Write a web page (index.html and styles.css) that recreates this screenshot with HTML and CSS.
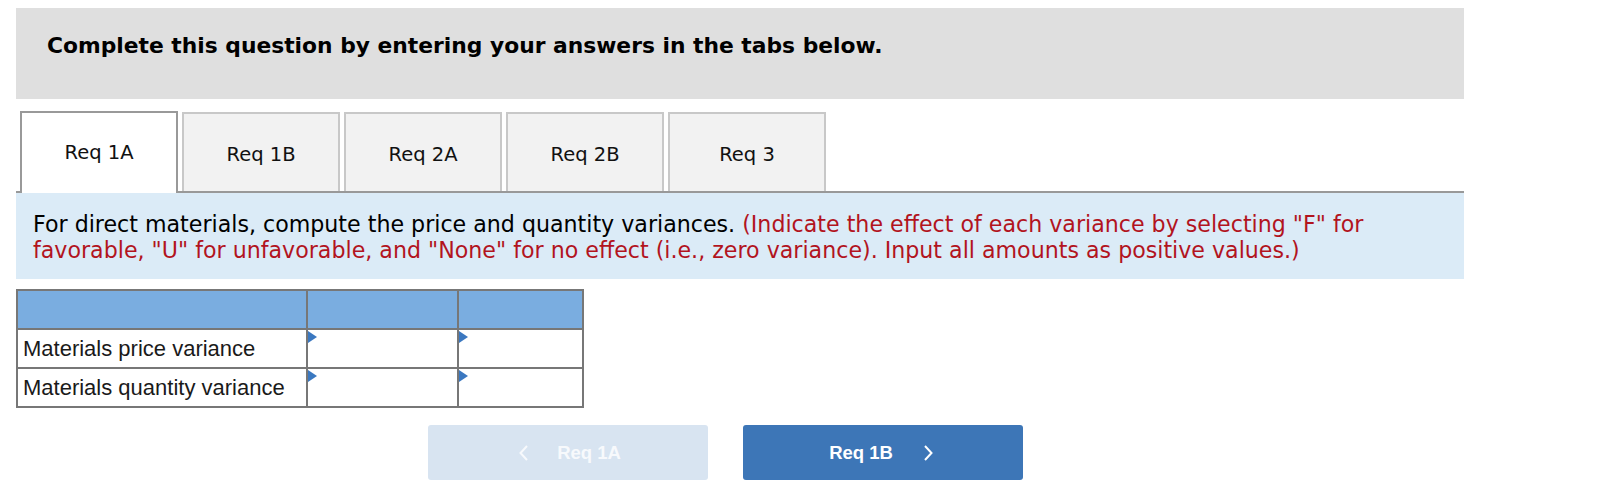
FILE: index.html
```html
<!DOCTYPE html>
<html lang="en">
<head>
<meta charset="utf-8">
<title>Req 1A</title>
<link rel="stylesheet" href="styles.css">
</head>
<body>
<div class="page">
  <div class="banner">
    <h2 class="banner-title">Complete this question by entering your answers in the tabs below.</h2>
  </div>

  <div class="tabs">
    <button class="tab tab-active">Req 1A</button>
    <button class="tab">Req 1B</button>
    <button class="tab">Req 2A</button>
    <button class="tab">Req 2B</button>
    <button class="tab">Req 3</button>
  </div>

  <div class="instructions">
    <p class="instructions-text">For direct materials, compute the price and quantity variances. <span class="hint">(Indicate the effect of each variance by selecting "F" for favorable, "U" for unfavorable, and "None" for no effect (i.e., zero variance). Input all amounts as positive values.)</span></p>
  </div>

  <table class="grid">
    <colgroup>
      <col class="col-label">
      <col class="col-amount">
      <col class="col-effect">
    </colgroup>
    <thead>
      <tr class="head-row"><th></th><th></th><th></th></tr>
    </thead>
    <tbody>
      <tr>
        <td class="label">Materials price variance</td>
        <td class="input"><span class="flag"></span></td>
        <td class="input"><span class="flag"></span></td>
      </tr>
      <tr>
        <td class="label">Materials quantity variance</td>
        <td class="input"><span class="flag"></span></td>
        <td class="input"><span class="flag"></span></td>
      </tr>
    </tbody>
  </table>

  <div class="nav">
    <button class="nav-btn nav-prev">
      <svg class="chev" width="9" height="16" viewBox="0 0 9 16"><polyline points="8,1 1.5,8 8,15" fill="none" stroke="currentColor" stroke-width="2"/></svg>
      <span>Req 1A</span>
    </button>
    <button class="nav-btn nav-next">
      <span>Req 1B</span>
      <svg class="chev" width="9" height="16" viewBox="0 0 9 16"><polyline points="1,1 7.5,8 1,15" fill="none" stroke="currentColor" stroke-width="2"/></svg>
    </button>
  </div>
</div>
</body>
</html>
```

FILE: styles.css
```css
* { box-sizing: border-box; }

body {
  margin: 0;
  background: #ffffff;
  font-family: "DejaVu Sans", Verdana, sans-serif;
  color: #000;
}

.page {
  width: 1448px;
  margin-left: 16px;
  padding-top: 8px;
}

.banner {
  background: #dfdfdf;
  height: 91px;
  padding: 26px 31px 0;
}

.banner-title {
  margin: 0;
  font-size: 21.8px;
  line-height: 24px;
  font-weight: bold;
  color: #000;
}

.tabs {
  display: flex;
  align-items: flex-end;
  gap: 4px;
  margin-top: 12px;
  padding-left: 4px;
  height: 82px;
  border-bottom: 2px solid #999;
}

.tab {
  width: 158px;
  height: 79px;
  margin: 0;
  padding: 0;
  background: #f2f2f2;
  border: 2px solid #c8c8c8;
  border-bottom: none;
  font-family: "DejaVu Sans", Verdana, sans-serif;
  font-size: 19.5px;
  color: #111;
  display: flex;
  align-items: center;
  justify-content: center;
  padding-top: 4px;
}

.tab-active {
  height: 82px;
  margin-bottom: -2px;
  background: #fff;
  border-color: #999;
  padding-top: 1px;
  padding-bottom: 2px;
}

.instructions {
  background: #dbebf7;
  height: 86px;
  padding: 18px 16px 0 17px;
}

.instructions-text {
  margin: 0;
  font-size: 22.15px;
  line-height: 26px;
  color: #000;
}

.hint {
  color: #b2141e;
}

.grid {
  margin-top: 10px;
  border-collapse: collapse;
  border: 2px solid #777;
  width: 566px;
  table-layout: fixed;
  font-family: "Liberation Sans", Arial, sans-serif;
}

.col-label { width: 290px; }
.col-amount { width: 151px; }
.col-effect { width: 125px; }

.grid th,
.grid td {
  border: 2px solid #777;
  height: 39px;
  padding: 0;
}

.head-row th {
  background: #7aade0;
}

.grid td.label {
  padding: 1px 0 0 5px;
  font-size: 22px;
  color: #1a1a1a;
  white-space: nowrap;
  vertical-align: middle;
}

.grid td.input {
  position: relative;
  background: #fff;
}

.flag {
  position: absolute;
  top: 1px;
  left: 0;
  width: 0;
  height: 0;
  border-left: 9px solid #3b78c0;
  border-top: 6.5px solid transparent;
  border-bottom: 6.5px solid transparent;
}

.nav {
  display: flex;
  gap: 35px;
  margin-top: 17px;
  padding-left: 412px;
}

.nav-btn {
  width: 280px;
  height: 55px;
  border: none;
  border-radius: 3px;
  display: flex;
  align-items: center;
  justify-content: center;
  font-family: "Liberation Sans", Arial, sans-serif;
  font-weight: bold;
  font-size: 18.5px;
  color: #fff;
  padding: 0;
}

.nav-prev {
  background: #d8e4f1;
  color: #f7f9fc;
  gap: 29px;
  padding-left: 4px;
}

.nav-next {
  background: #3d76b7;
  gap: 31px;
  padding-right: 4px;
}

.chev {
  display: block;
}
```
